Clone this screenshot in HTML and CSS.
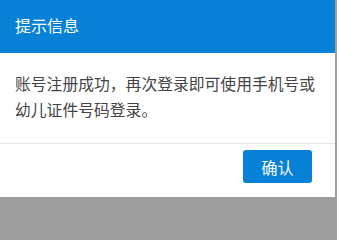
FILE: index.html
```html
<!DOCTYPE html>
<html lang="zh-CN">
<head>
<meta charset="utf-8">
<link rel="stylesheet" href="styles.css">
</head>
<body>
<div class="dialog">
  <div class="dialog-header">提示信息</div>
  <div class="dialog-body">账号注册成功，再次登录即可使用手机号或幼儿证件号码登录。</div>
  <div class="dialog-footer">
    <button class="btn-confirm">确认</button>
  </div>
</div>
</body>
</html>
```
FILE: styles.css
```css
html, body {
  margin: 0;
  padding: 0;
  width: 337px;
  height: 201px;
  background: #9e9e9e;
  overflow: hidden;
  font-family: "Noto Sans CJK SC", "Noto Sans", sans-serif;
}
.dialog {
  width: 335px;
  height: 197px;
  background: #ffffff;
  display: flex;
  flex-direction: column;
}
.dialog-header {
  height: 53px;
  background: #0681d6;
  color: #ffffff;
  font-size: 16px;
  line-height: 51px;
  padding-left: 15px;
  box-sizing: border-box;
}
.dialog-body {
  padding: 18px 8px 20px 15px;
  font-size: 15.8px;
  line-height: 26px;
  color: #444444;
  border-bottom: 1px solid #e6e6e6;
}
.dialog-footer {
  flex: 1;
  display: flex;
  justify-content: flex-end;
  align-items: flex-start;
  padding: 6px 23px 0 0;
}
.btn-confirm {
  width: 69px;
  height: 33px;
  border: none;
  border-radius: 3px;
  background: #0681d6;
  color: #ffffff;
  font-family: "Noto Sans CJK SC", "Noto Sans", sans-serif;
  font-size: 16px;
  padding: 0;
}
```
